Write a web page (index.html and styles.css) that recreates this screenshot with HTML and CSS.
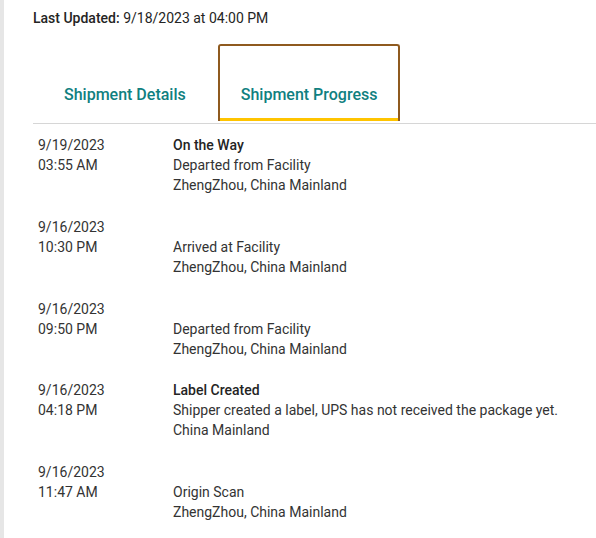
FILE: index.html
```html
<!DOCTYPE html>
<html>
<head>
<meta charset="utf-8">
<link rel="stylesheet" href="styles.css">
</head>
<body>
<div class="rail"></div>
<main class="main">
  <p class="updated"><span class="updated-label">Last Updated:</span> 9/18/2023 at 04:00 PM</p>
  <nav class="tabs">
    <div class="tab">Shipment Details</div>
    <div class="tab tab-active">Shipment Progress</div>
  </nav>
  <ul class="events">
    <li class="event">
      <div class="when"><div>9/19/2023</div><div>03:55 AM</div></div>
      <div class="what"><div class="status">On the Way</div><div>Departed from Facility</div><div>ZhengZhou, China Mainland</div></div>
    </li>
    <li class="event">
      <div class="when"><div>9/16/2023</div><div>10:30 PM</div></div>
      <div class="what"><div class="status"></div><div>Arrived at Facility</div><div>ZhengZhou, China Mainland</div></div>
    </li>
    <li class="event">
      <div class="when"><div>9/16/2023</div><div>09:50 PM</div></div>
      <div class="what"><div class="status"></div><div>Departed from Facility</div><div>ZhengZhou, China Mainland</div></div>
    </li>
    <li class="event">
      <div class="when"><div>9/16/2023</div><div>04:18 PM</div></div>
      <div class="what"><div class="status">Label Created</div><div>Shipper created a label, UPS has not received the package yet.</div><div>China Mainland</div></div>
    </li>
    <li class="event">
      <div class="when"><div>9/16/2023</div><div>11:47 AM</div></div>
      <div class="what"><div class="status"></div><div>Origin Scan</div><div>ZhengZhou, China Mainland</div></div>
    </li>
  </ul>
</main>
</body>
</html>
```
FILE: styles.css
```css
html, body {
  margin: 0;
  padding: 0;
  background: #fff;
}
body {
  display: flex;
  min-height: 538px;
  font-family: Roboto, "Liberation Sans", sans-serif;
  font-size: 14px;
  line-height: 20px;
  color: #333;
}
.rail {
  width: 4px;
  flex: none;
  background: #e6e6e6;
}
.main {
  flex: 1;
  padding-left: 29px;
}
.updated {
  margin: 8px 0 0;
  color: #242424;
}
.updated-label {
  font-weight: 500;
}
.tabs {
  display: flex;
  gap: 9px;
  margin-top: 16px;
  padding-left: 8px;
  border-bottom: 1px solid #d6d6d6;
}
.tab {
  box-sizing: border-box;
  height: 77px;
  margin-bottom: 2px;
  padding: 39px 21px 0;
  border: 2px solid transparent;
  border-bottom-width: 0;
  font-size: 16px;
  font-weight: 500;
  line-height: 20px;
  color: #0f8080;
}
.tab-active {
  border-color: #8f5a1f;
  border-radius: 3px 3px 0 0;
  box-shadow: inset 0 -3px 0 #ffc400;
}
.events {
  list-style: none;
  margin: 0;
  padding: 11px 0 0 5px;
  display: flex;
  flex-direction: column;
  gap: 21.75px;
}
.event {
  display: flex;
}
.when {
  width: 135px;
  flex: none;
}
.status {
  font-weight: 500;
  min-height: 20px;
  color: #242424;
}
```
